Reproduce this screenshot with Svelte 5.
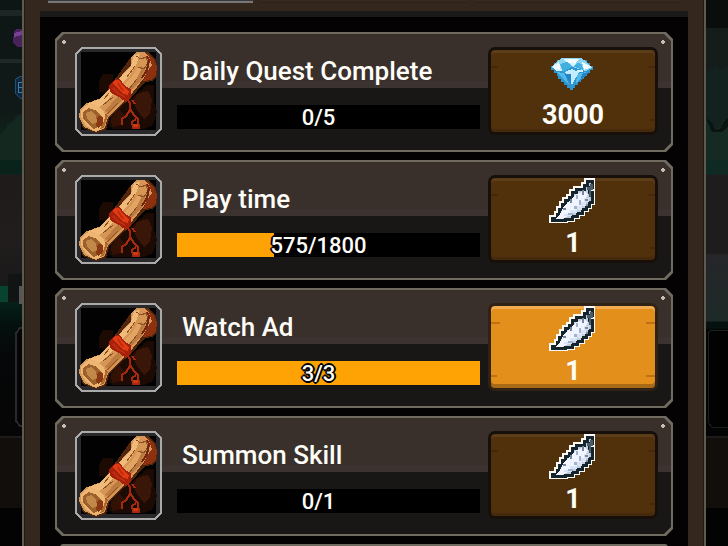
<script lang="ts">
  type Quest = {
    id: string;
    title: string;
    value: number;
    goal: number;
    reward: 'diamond' | 'feather';
    amount: number;
  };

  const quests: Quest[] = [
    { id: 'daily', title: 'Daily Quest Complete', value: 0, goal: 5, reward: 'diamond', amount: 3000 },
    { id: 'time', title: 'Play time', value: 575, goal: 1800, reward: 'feather', amount: 1 },
    { id: 'ad', title: 'Watch Ad', value: 3, goal: 3, reward: 'feather', amount: 1 },
    { id: 'skill', title: 'Summon Skill', value: 0, goal: 1, reward: 'feather', amount: 1 },
  ];

  const feather =
    'M4 42v-2h5v-4h2v-5h3v-5h3v-4h4v-3h3v-5h4v-3h8V7h3V3h5v6h-3v5h3v10h-3v4h-3v3h-4v4h-5v3h-5v3h-7v1z';
</script>

<div class="screen">
  <div class="scene left" aria-hidden="true">
    <svg viewBox="0 0 22 546" preserveAspectRatio="xMaxYMin slice" shape-rendering="crispEdges">
      <path d="M0 134l5-4 3-6 6-3 3-5 5-2v46H0z" fill="#14281f" />
      <path d="M14 31l3-2h5v18h-5l-4-4z" fill="#47235a" />
      <path d="M14 33l8-2v4l-8 2z" fill="#7a3f92" />
      <path d="M15 80l5-4h2v22h-2l-5-5z" fill="#10263c" stroke="#1c5276" />
      <path d="M22 82h-4v10h4M18 87h4" fill="none" stroke="#3c7ba4" />
      <path d="M0 286h8v16H0z" fill="#07432f" />
      <path d="M8 274h14v28H8z" fill="#101514" />
      <path d="M19 286h3v18h-3z" fill="#55575a" />
      <path d="M23 328h-3l-4 5v88l4 5h3" fill="#050506" stroke="#292a30" stroke-width="2" />
    </svg>
  </div>

  <main class="dialog">
    <div class="tabs">
      <button class="tab active" aria-label="Daily"></button>
      <button class="tab" aria-label="Weekly"></button>
      <button class="tab" aria-label="Repeat"></button>
    </div>
    <div class="list">
      {#each quests as quest (quest.id)}
        <article class="card">
          <div class="icon">
            <svg viewBox="0 0 87 89" shape-rendering="crispEdges" aria-hidden="true">
              <path d="M6 2h75l4 4v77l-4 4H6l-4-4V6z" fill="#29292b" />
              <path d="M6 5h75v78H6z" fill="#030202" />
              <path d="M28 27h10v9l-5 9h-9V34zM60 48l12-10h7v18l3 8-4 14-9 4H38l-6-5 14-20z" fill="#1c0b04" />
              <path d="M62 47l11-3 4 9-2 13-6 6-7-9-4-9z" fill="#391607" />
              <path d="M36 71l8-9 6 7-4 9-9 2z" fill="#331205" />
              <!-- parchment roll -->
              <path d="M56 10l5-5h13l7 8 1 17-5 4-7 1-15 17-11 9-10 11-3 11-10 3-13-5-3-9 20-19z" fill="#54250d" />
              <path d="M72 6l6 5 4 8-1 10-5 4-8 1 4-9-1-9z" fill="#8c300f" />
              <path d="M56 10l5-5h8l5 4 3 9-5 7-3 6-14 18-11 10-11 11-3 11-9 4-12-5-5-10 1-8 5-5 16-6 13-14 17-19z" fill="#d59555" />
              <path d="M59 8l6-1-3 9-7 12-15 17-13 13-5 4-10-5 13-5 15-16 16-17z" fill="#f0ba79" />
              <path d="M66 19l4 4-2 8-15 16-11 11-9 9-3-3 12-14 11-12z" fill="#bd7b40" />
              <path d="M63 20l3 3-5 10-11 11-4-4 11-10z" fill="#e2a462" />
              <path d="M61 9l5 3 5-2 2 6-4 6-6-2M60 19l-8 11M62 32l-8 10M38 50l-10 8M43 56L32 67l-4 1M34 46l-5 6" fill="none" stroke="#8b4e22" stroke-width="1" />
              <path d="M72 9l2 4-2 10-5 8" fill="none" stroke="#6f260d" stroke-width="2" />
              <path d="M6 63l5-5 8-1 9 6 4 9-4 10-8 2-9-5-5-9z" fill="#ecb572" />
              <path d="M8 65l6-4 8 3 5 6-2 9-6 3-6-5-5-5z" fill="#9b602c" />
              <path d="M11 66l5-2 5 4 1 7-4 2-6-5z" fill="#c28849" />
              <path d="M23 69l5 1v8l-5 3-2-3z" fill="#88380f" />
              <path d="M31 66l2 3-4 12-4 1 4-8z" fill="#af6a33" />
              <!-- ribbon and tassel -->
              <path d="M34 38l6-6h5l5 7 6 3v8l-5 5-7-5-8-4-2-5z" fill="#a7200a" />
              <path d="M37 36l4-3h3l5 7 5 4-1 4-5-1-6-7z" fill="#e03b13" />
              <path d="M38 41l6 6 6 3M43 36l5 8" fill="none" stroke="#bf2b0d" stroke-width="2" />
              <path d="M52 52l3 4v7l-4 6-4 3v6M55 62l4 6 4 4 1 9h-6l-1-6 4-3M57 53l3 4" fill="none" stroke="#a3290f" stroke-width="2" />
              <path d="M58 77h5v3h-5z" fill="#cb3a16" />
              <path d="M7 1h73l6 6v75l-6 6H7l-6-6V7z" fill="none" stroke="#aaaaab" stroke-width="2" />
            </svg>
          </div>

          <div class="info">
            <h2 class="title">{quest.title}</h2>
            <div
              class="bar"
              role="progressbar"
              aria-label={quest.title}
              aria-valuemin="0"
              aria-valuemax={quest.goal}
              aria-valuenow={quest.value}
            >
              <div class="fill" style="width: {(quest.value / quest.goal) * 100}%"></div>
              <span class="count">{quest.value}/{quest.goal}</span>
            </div>
          </div>

          <button class="claim" class:ready={quest.value >= quest.goal} disabled={quest.value < quest.goal}>
            {#if quest.reward === 'diamond'}
              <svg viewBox="0 0 50 46" shape-rendering="crispEdges" aria-hidden="true">
                <path d="M14 8h19v2h6v3h3v3h3v4h-3v3h-3v3h-3v3h-3v3h-3v3h-3v3h-2v2h-3v-2h-3v-3h-3v-3h-3v-3h-3v-3H9v-3H6v-3H3v-4h3v-3h3v-3h5z" fill="#2c96d2" />
                <path d="M14 8h19l6 4 5 6-6 3-14-4-14 4-7-4 5-5z" fill="#8bd6f2" />
                <path d="M15 9h16l-4 4h-8zM4 17l7-5 2 6-5 3zM34 12l10 5-8 3z" fill="#f3fcff" />
                <path d="M12 14l7-2 5 5-9 5zM29 13l5 1 1 6-9-3z" fill="#42afe0" />
                <path d="M8 22l8 1 6 13-6-6zM29 24l9-2-10 12z" fill="#52bae9" />
                <path d="M17 22l7-3 7 3-7 13z" fill="#c3edfc" />
                <path d="M17 24h6v11zM35 23h5l-9 9z" fill="#2384c9" />
                <path d="M21 13h7l-3 4zM8 19h6v2H8zM29 20h6v2h-6z" fill="#d8f5ff" />
              </svg>
            {:else}
              <svg viewBox="0 0 50 46" shape-rendering="crispEdges" aria-hidden="true">
                <path d={feather} fill="none" stroke="#fbfaf6" stroke-width="6" />
                <path d={feather} fill="#c3cde0" stroke="#16242c" stroke-width="3" />
                <path d="M8 41l4-5 4-8 6-6 5-5 9-4 4 3-4 8-7 8-7 5-8 4z" fill="#f1f5ff" />
                <path d="M36 20h5v4h-3v4h-4v4h-5v3h-5v3h-8v-2h6v-4h6v-4h5v-4h3z" fill="#dbe4f4" />
                <path d="M42 6h3v6h-2v7h-2v-7h-2V9h3z" fill="#4d5c6d" />
                <path d="M34 12h2v5h-2zM37 21h3v2h-3zM22 21h2v4h-2zM15 30h3v2h-3zM38 26h2v2h-2z" fill="#7487a0" />
                <path d="M31 22h2v5h-2zM26 28h3v3h-3zM20 35h5v2h-5zM28 17h2v4h-2z" fill="#a3b1d0" />
              </svg>
            {/if}
            <span class="amount">{quest.amount}</span>
          </button>
        </article>
      {/each}
      <article class="card" aria-hidden="true"></article>
    </div>
  </main>

  <div class="scene right" aria-hidden="true">
    <svg viewBox="0 0 22 546" preserveAspectRatio="xMinYMin slice" shape-rendering="crispEdges">
      <path d="M0 72l5-2 4-4 6 4 7-3v93H0z" fill="#13221e" />
      <path d="M0 120h5l3 8h6l3-8h5v40H0z" fill="#142a23" />
      <path d="M0 118l6 4 3 7h5l4-8 4-3v8l-5 6H6z" fill="#0a1512" />
      <path d="M23 330H5l-3 4v88l4 5h17" fill="#020202" stroke="#1a1f1e" />
    </svg>
  </div>
</div>

<style>
  :global(body) { margin: 0; background: #000; }
  .screen {
    display: grid;
    grid-template-columns: 22px minmax(0, 1fr) 22px;
    height: 100vh;
    overflow: hidden;
    font-family: Roboto, "Liberation Sans", sans-serif;
    color: #fffdf8;
  }
  .scene {
    overflow: hidden;
    background: linear-gradient(
      #0e1615 0 10px, #1e2625 10px 16px, #0e1715 16px 59px, #202827 59px 63px,
      #101917 63px 110px, #10201a 130px 160px, #0a231a 160px 174px, #1f1b1b 175px,
      #211d1d 240px, #1b191a 280px, #06201a 302px, #04100d 325px, #060708 360px,
      #060606 436px, #1c1b1a 436px 438px, #110e0c 438px 508px, #030303 508px
    );
  }
  .scene.right {
    background: linear-gradient(
      #090e0d 0 28px, #141d1a 28px 160px, #0f2a22 160px 174px, #1f1c1d 175px 254px,
      #262629 254px, #1d2a28 321px, #04110e 322px 328px, #030404 330px 436px,
      #1c1b1a 436px 438px, #110e0c 438px 508px, #030303 508px
    );
  }
  .scene svg { display: block; width: 22px; height: 546px; }
  .dialog {
    display: flex;
    flex-direction: column;
    min-height: 0;
    padding: 0 16px;
    background: #33271e;
    border: 2px solid #5f5a50;
    border-width: 0 2px;
    box-shadow: inset 1px 0 #211a14, inset -1px 0 #211a14;
  }
  .tabs {
    display: grid;
    grid-template-columns: repeat(3, minmax(0, 1fr));
    gap: 8px;
    flex: none;
    height: 11px;
    padding: 0 8px;
  }
  .tab {
    height: 3px;
    padding: 0;
    border: 0;
    border-bottom: 1px solid #2b211a;
    background: #35291f;
  }
  .tab.active {
    border-bottom: 2px solid #77777a;
    background: #3a3a3d;
  }
  .list {
    display: flex;
    flex: 1;
    flex-direction: column;
    gap: 8px;
    min-height: 0;
    overflow: hidden;
    padding: 15px 15px 0;
    border-top: 6px solid #1c1a19;
    background: #040202;
  }
  .card {
    --bevel: polygon(7px 0, calc(100% - 7px) 0, 100% 7px, 100% calc(100% - 7px), calc(100% - 7px) 100%, 7px 100%, 0 calc(100% - 7px), 0 7px);
    position: relative;
    isolation: isolate;
    display: grid;
    grid-template-columns: 87px minmax(0, 1fr) 170px;
    flex: none;
    align-items: start;
    box-sizing: border-box;
    min-height: 120px;
    padding: 15px 15px 16px 20px;
    background: #706b60;
    clip-path: var(--bevel);
  }
  .card::before {
    content: '';
    position: absolute;
    z-index: -1;
    inset: 2px;
    background:
      radial-gradient(circle at 7px 8px, #c5bfb1 0 2px, transparent 2px),
      radial-gradient(circle at calc(100% - 8px) 8px, #c5bfb1 0 2px, transparent 2px),
      linear-gradient(#39302b 0 47px, #3c322f 47px 54px, #191716 54px);
    clip-path: var(--bevel);
  }
  .icon svg { display: block; width: 87px; height: 89px; }
  .info {
    display: grid;
    gap: 10px;
    margin: 0 8px 0 15px;
  }
  .title {
    margin: 0;
    padding-left: 5px;
    font-size: 26px;
    font-weight: 500;
    line-height: 48px;
    white-space: nowrap;
  }
  .bar {
    position: relative;
    height: 24px;
    background: #000;
    text-align: center;
  }
  .fill {
    position: absolute;
    inset: 0 auto 0 0;
    background: #ffa305;
  }
  .count {
    position: relative;
    padding-right: 20px;
    font-size: 22px;
    font-weight: 500;
    line-height: 26px;
    text-shadow: 2px 0 #000, -2px 0 #000, 0 2px #000, 0 -2px #000,
      1px 1px #000, -1px 1px #000, 1px -1px #000, -1px -1px #000;
  }
  .claim {
    display: flex;
    flex-direction: column;
    align-items: center;
    height: 88px;
    padding: 0;
    border: 3px solid #17100a;
    border-radius: 7px;
    background:
      linear-gradient(#442809, #442809) 0 16px / 7px 2px no-repeat,
      linear-gradient(#442809, #442809) 100% 16px / 7px 2px no-repeat,
      linear-gradient(#442809, #442809) 100% 69px / 5px 2px no-repeat,
      #51310b;
    box-shadow: inset 0 3px #5c3d19, inset 0 -3px #462a0b;
    font-family: inherit;
    color: #fffdf8;
  }
  .claim.ready {
    border-color: #302316;
    background:
      linear-gradient(#bd7110, #bd7110) 0 16px / 9px 2px no-repeat,
      linear-gradient(#bd7110, #bd7110) 100% 16px / 9px 2px no-repeat,
      linear-gradient(#bd7110, #bd7110) 0 69px / 6px 2px no-repeat,
      linear-gradient(#bd7110, #bd7110) 100% 69px / 9px 2px no-repeat,
      #e38f1b;
    box-shadow: inset 0 3px #f2ab50, inset 0 -4px #a96a18;
    cursor: pointer;
  }
  .claim svg { flex: none; width: 50px; height: 46px; }
  .amount {
    font-size: 27px;
    font-weight: 700;
    line-height: 38px;
  }
</style>
